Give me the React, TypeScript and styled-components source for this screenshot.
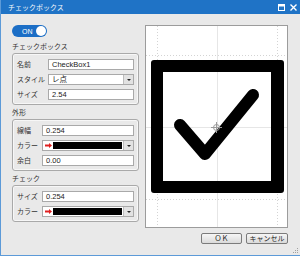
import React from "react";
import styled, { createGlobalStyle } from "styled-components";

const GlobalStyle = createGlobalStyle`
  html, body { margin: 0; padding: 0; }
  body { font-family: "Noto Sans CJK JP", "Noto Sans", sans-serif; }
`;

const Window = styled.div`
  position: relative;
  width: 300px;
  height: 256px;
  box-sizing: border-box;
  display: flex;
  flex-direction: column;
  background: #e9e9e9;
  border-left: 1px solid #5c9ad8;
  border-bottom: 1px solid #5c9ad8;
  overflow: hidden;
`;

const TitleBar = styled.div`
  height: 14px;
  flex: none;
  display: flex;
  align-items: center;
  padding: 0 3px 0 7px;
  background: #1f73c6;
  color: #f4f8fc;
  font-size: 7px;
  line-height: 14px;
`;

const TitleText = styled.span`
  flex: 1;
`;

const TitleIcons = styled.div`
  display: flex;
  gap: 5px;
  align-items: center;
`;

const Body = styled.div`
  flex: 1;
  display: flex;
  gap: 6px;
  padding: 11px 12px 0 11px;
`;

const LeftPanel = styled.div`
  width: 127px;
  display: flex;
  flex-direction: column;
`;

const Toggle = styled.div`
  width: 35px;
  height: 12px;
  box-sizing: border-box;
  border-radius: 6px;
  background: #1b6ec6;
  display: flex;
  align-items: center;
  padding: 0 1px 0 10px;
  margin-bottom: 2px;
  color: #fff;
  font-family: "Liberation Sans", sans-serif;
  font-size: 7px;
`;

const Knob = styled.span`
  margin-left: auto;
  width: 10px;
  height: 10px;
  border-radius: 50%;
  background: #fff;
`;

const SectionLabel = styled.div`
  height: 14px;
  line-height: 14px;
  font-size: 7px;
  color: #333;
`;

const Group = styled.div`
  display: flex;
  flex-direction: column;
  gap: 4px;
  padding: 5px 4px 4px;
  border: 1px solid #a9a9a9;
  border-radius: 3px;
  box-shadow: inset 0 0 0 1px #f7f7f7;
`;

const Row = styled.div<{ $labelWidth: number }>`
  display: grid;
  grid-template-columns: ${(p) => p.$labelWidth}px 1fr;
  align-items: center;
  height: 11px;
`;

const Label = styled.span`
  font-size: 7px;
  line-height: 11px;
  color: #333;
  white-space: nowrap;
`;

const Field = styled.div`
  height: 11px;
  box-sizing: border-box;
  display: flex;
  align-items: center;
  border: 1px solid #a9a9a9;
  background: #fff;
  font-family: "Liberation Sans", "Noto Sans CJK JP", sans-serif;
  font-size: 7.5px;
  color: #222;
`;

const FieldText = styled.span`
  flex: 1;
  padding-left: 3px;
  line-height: 9px;
`;

const DropButton = styled.span`
  width: 9px;
  height: 9px;
  display: flex;
  align-items: center;
  justify-content: center;
  background: #e2e2e2;
  border-left: 1px solid #bdbdbd;
  &::after {
    content: "";
    border-left: 2px solid transparent;
    border-right: 2px solid transparent;
    border-top: 2px solid #222;
  }
`;

const Swatch = styled.span`
  flex: 1;
  height: 7px;
  margin: 0 1px 0 1px;
  background: #000;
`;

const ColorArrow = styled.svg`
  margin-left: 2px;
  flex: none;
`;

const RightPanel = styled.div`
  width: 143px;
  display: flex;
  flex-direction: column;
`;

const Preview = styled.div`
  height: 203px;
  box-sizing: border-box;
  border: 1px solid #9c9c9c;
  background: #fff;
`;

const ButtonRow = styled.div`
  display: flex;
  justify-content: flex-end;
  gap: 4px;
  margin-top: 5px;
`;

const Button = styled.button<{ $w: number }>`
  width: ${(p) => p.$w}px;
  height: 11px;
  padding: 0;
  border: 1px solid #7b7b7b;
  border-radius: 2px;
  background: linear-gradient(#f6f6f6, #dadada);
  font-family: "Noto Sans CJK JP", sans-serif;
  font-size: 7px;
  line-height: 9px;
  color: #222;
`;

const Grip = styled.svg`
  position: absolute;
  right: 1px;
  bottom: 1px;
`;

const RedArrow = () => (
  <ColorArrow width="7" height="5" viewBox="0 0 7 5">
    <path d="M0 1.6h4V0l3 2.5L4 5V3.4H0z" fill="#e02020" />
  </ColorArrow>
);

const TextField = ({ value }: { value: string }) => (
  <Field>
    <FieldText>{value}</FieldText>
  </Field>
);

const SelectField = ({ value }: { value: string }) => (
  <Field>
    <FieldText>{value}</FieldText>
    <DropButton />
  </Field>
);

const ColorField = () => (
  <Field>
    <RedArrow />
    <Swatch />
    <DropButton />
  </Field>
);

const CheckPreview = () => (
  <svg width="141" height="201" viewBox="0 0 141 201">
    <g stroke="#d4d4d4" strokeWidth="1" strokeDasharray="1 2">
      <line x1="11.5" y1="0" x2="11.5" y2="201" />
      <line x1="131.5" y1="0" x2="131.5" y2="201" />
      <line x1="0" y1="29.5" x2="141" y2="29.5" />
      <line x1="0" y1="173.5" x2="141" y2="173.5" />
    </g>
    <g stroke="#e6e6e6" strokeWidth="1">
      <line x1="71.5" y1="0" x2="71.5" y2="201" />
      <line x1="0" y1="101.5" x2="141" y2="101.5" />
    </g>
    <path
      d="M8 34h127a3 3 0 0 1 3 3v127a3 3 0 0 1-3 3H8a3 3 0 0 1-3-3V37a3 3 0 0 1 3-3zM17 46v109h108V46z"
      fill="#000"
      fillRule="evenodd"
    />
    <polyline
      points="34,99 59,128 107,69"
      fill="none"
      stroke="#000"
      strokeWidth="12"
      strokeLinecap="round"
      strokeLinejoin="round"
    />
    <g stroke="#9a9a9a" strokeWidth="1" fill="none">
      <circle cx="70.5" cy="101.5" r="3" />
      <line x1="65" y1="101.5" x2="76" y2="101.5" />
      <line x1="70.5" y1="96" x2="70.5" y2="107" />
    </g>
  </svg>
);

export default function App() {
  return (
    <>
      <GlobalStyle />
      <Window>
        <TitleBar>
          <TitleText>チェックボックス</TitleText>
          <TitleIcons>
            <svg width="7" height="7" viewBox="0 0 7 7">
              <rect x="0.5" y="0.5" width="6" height="6" fill="none" stroke="#fff" />
              <rect x="0" y="0" width="7" height="2.5" fill="#fff" />
            </svg>
            <svg width="7" height="7" viewBox="0 0 7 7">
              <path d="M0.5 0.5l6 6M6.5 0.5l-6 6" stroke="#fff" strokeWidth="1.4" />
            </svg>
          </TitleIcons>
        </TitleBar>
        <Body>
          <LeftPanel>
            <Toggle>
              ON
              <Knob />
            </Toggle>
            <SectionLabel>チェックボックス</SectionLabel>
            <Group>
              <Row $labelWidth={31}>
                <Label>名前</Label>
                <TextField value="CheckBox1" />
              </Row>
              <Row $labelWidth={31}>
                <Label>スタイル</Label>
                <SelectField value="レ点" />
              </Row>
              <Row $labelWidth={31}>
                <Label>サイズ</Label>
                <TextField value="2.54" />
              </Row>
            </Group>
            <SectionLabel>外形</SectionLabel>
            <Group>
              <Row $labelWidth={25}>
                <Label>線幅</Label>
                <TextField value="0.254" />
              </Row>
              <Row $labelWidth={25}>
                <Label>カラー</Label>
                <ColorField />
              </Row>
              <Row $labelWidth={25}>
                <Label>余白</Label>
                <TextField value="0.00" />
              </Row>
            </Group>
            <SectionLabel>チェック</SectionLabel>
            <Group>
              <Row $labelWidth={25}>
                <Label>サイズ</Label>
                <TextField value="0.254" />
              </Row>
              <Row $labelWidth={25}>
                <Label>カラー</Label>
                <ColorField />
              </Row>
            </Group>
          </LeftPanel>
          <RightPanel>
            <Preview>
              <CheckPreview />
            </Preview>
            <ButtonRow>
              <Button $w={41}>ＯＫ</Button>
              <Button $w={42}>キャンセル</Button>
            </ButtonRow>
          </RightPanel>
        </Body>
        <Grip width="6" height="6" viewBox="0 0 6 6">
          <g fill="#a0a0a0">
            <rect x="4" y="0" width="1" height="1" />
            <rect x="2" y="2" width="1" height="1" />
            <rect x="4" y="2" width="1" height="1" />
            <rect x="0" y="4" width="1" height="1" />
            <rect x="2" y="4" width="1" height="1" />
            <rect x="4" y="4" width="1" height="1" />
          </g>
        </Grip>
      </Window>
    </>
  );
}
